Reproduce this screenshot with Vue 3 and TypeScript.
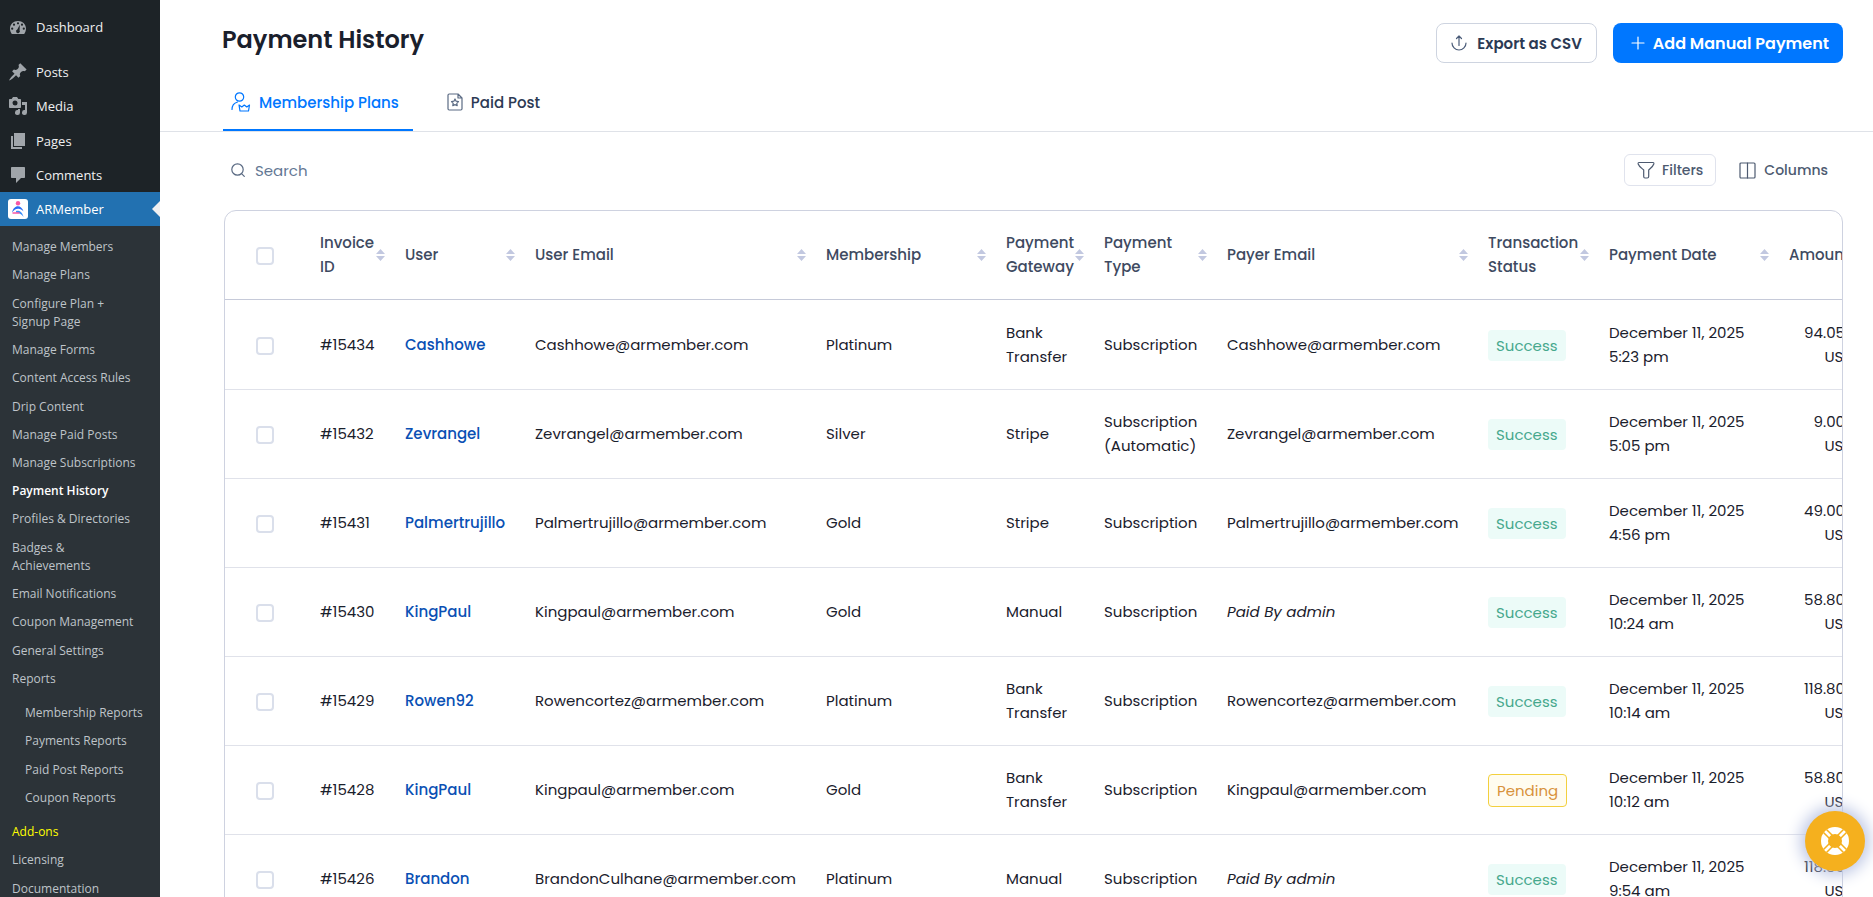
<script setup lang="ts">
import { ref } from 'vue'

interface MenuItem { label: string; kind?: 'current' | 'addons'; children?: string[] }
interface Payment {
  id: string; user: string; email: string; plan: string; gateway: string; type: string
  payer: string; status: 'Success' | 'Pending'; date: string; time: string; amount: string
}

const topMenu: { label: string; icon: string }[] = [
  { label: 'Posts', icon: 'posts' },
  { label: 'Media', icon: 'media' },
  { label: 'Pages', icon: 'pages' },
  { label: 'Comments', icon: 'comments' },
]

const subMenu: MenuItem[] = [
  { label: 'Manage Members' },
  { label: 'Manage Plans' },
  { label: 'Configure Plan + Signup Page' },
  { label: 'Manage Forms' },
  { label: 'Content Access Rules' },
  { label: 'Drip Content' },
  { label: 'Manage Paid Posts' },
  { label: 'Manage Subscriptions' },
  { label: 'Payment History', kind: 'current' },
  { label: 'Profiles & Directories' },
  { label: 'Badges & Achievements' },
  { label: 'Email Notifications' },
  { label: 'Coupon Management' },
  { label: 'General Settings' },
  { label: 'Reports', children: ['Membership Reports', 'Payments Reports', 'Paid Post Reports', 'Coupon Reports'] },
  { label: 'Add-ons', kind: 'addons' },
  { label: 'Licensing' },
  { label: 'Documentation' },
]

const columns: { label: string; key: string }[] = [
  { label: 'Invoice ID', key: 'invoice' },
  { label: 'User', key: 'user' },
  { label: 'User Email', key: 'email' },
  { label: 'Membership', key: 'plan' },
  { label: 'Payment Gateway', key: 'gateway' },
  { label: 'Payment Type', key: 'type' },
  { label: 'Payer Email', key: 'payer' },
  { label: 'Transaction Status', key: 'status' },
  { label: 'Payment Date', key: 'date' },
  { label: 'Amount', key: 'amount' },
]

const day = 'December 11, 2025'
const admin = 'Paid By admin'
const payments: Payment[] = [
  { id: '#15434', user: 'Cashhowe', email: 'Cashhowe@armember.com', plan: 'Platinum', gateway: 'Bank Transfer', type: 'Subscription', payer: 'Cashhowe@armember.com', status: 'Success', date: day, time: '5:23 pm', amount: '94.05' },
  { id: '#15432', user: 'Zevrangel', email: 'Zevrangel@armember.com', plan: 'Silver', gateway: 'Stripe', type: 'Subscription (Automatic)', payer: 'Zevrangel@armember.com', status: 'Success', date: day, time: '5:05 pm', amount: '9.00' },
  { id: '#15431', user: 'Palmertrujillo', email: 'Palmertrujillo@armember.com', plan: 'Gold', gateway: 'Stripe', type: 'Subscription', payer: 'Palmertrujillo@armember.com', status: 'Success', date: day, time: '4:56 pm', amount: '49.00' },
  { id: '#15430', user: 'KingPaul', email: 'Kingpaul@armember.com', plan: 'Gold', gateway: 'Manual', type: 'Subscription', payer: admin, status: 'Success', date: day, time: '10:24 am', amount: '58.80' },
  { id: '#15429', user: 'Rowen92', email: 'Rowencortez@armember.com', plan: 'Platinum', gateway: 'Bank Transfer', type: 'Subscription', payer: 'Rowencortez@armember.com', status: 'Success', date: day, time: '10:14 am', amount: '118.80' },
  { id: '#15428', user: 'KingPaul', email: 'Kingpaul@armember.com', plan: 'Gold', gateway: 'Bank Transfer', type: 'Subscription', payer: 'Kingpaul@armember.com', status: 'Pending', date: day, time: '10:12 am', amount: '58.80' },
  { id: '#15426', user: 'Brandon', email: 'BrandonCulhane@armember.com', plan: 'Platinum', gateway: 'Manual', type: 'Subscription', payer: admin, status: 'Success', date: day, time: '9:54 am', amount: '118.80' },
]

const query = ref('')
const selected = ref<string[]>([])
</script>

<template>
  <div class="app">
    <nav class="sidebar" aria-label="Admin menu">
      <a href="#" class="item first">
        <svg class="glyph" viewBox="0 0 20 20"><path fill-rule="evenodd" d="M3.8 17h12.4c1.1-1.5 1.8-3.4 1.8-5.500C18 7 14.400 4 10 4s-8 3-8 7.500c0 2.100.7 4 1.800 5.500zM10 5.200a1.100 1.100 0 110 2.200 1.100 1.100 0 010-2.200zM6 6.600a1.100 1.100 0 110 2.200 1.100 1.100 0 010-2.200zm8 0a1.100 1.100 0 110 2.200 1.100 1.100 0 010-2.200zM4.200 10.600a1.100 1.100 0 110 2.200 1.100 1.100 0 010-2.200zm11.600 0a1.100 1.100 0 110 2.200 1.100 1.100 0 010-2.200zM11.800 7.800l-.2 5.500a1.900 1.900 0 11-2.300-.8z" /></svg>
        <span>Dashboard</span>
      </a>
      <a v-for="m in topMenu" :key="m.label" href="#" class="item">
        <svg v-if="m.icon === 'posts'" class="glyph" viewBox="0 0 20 20"><path d="M10.440 3.020l1.820-1.820 6.360 6.350-1.830 1.820c-1.050-.68-2.480-.57-3.410.36l-.75.750c-.92.930-1.040 2.350-.35 3.410l-1.830 1.820-2.410-2.410-2.800 2.790c-.42.420-3.380 2.710-3.800 2.290s1.860-3.390 2.280-3.810l2.790-2.790L4.100 9.360l1.830-1.820c1.050.690 2.480.570 3.400-.360l.75-.750c.930-.920 1.050-2.350.360-3.410z" /></svg>
        <svg v-else-if="m.icon === 'media'" class="glyph" viewBox="0 0 20 20"><path fill-rule="evenodd" d="M13 11V4c0-.55-.45-1-1-1h-1.670L9 1H5L3.670 3H2c-.55 0-1 .45-1 1v7c0 .55.450 1 1 1h10c.55 0 1-.45 1-1zM7 4.500a2.500 2.500 0 110 5 2.500 2.500 0 010-5zM14 6h5v10.500a2.500 2.500 0 11-2-2.450V9h-3zm-4 8.050V13h2v3.500a2.500 2.500 0 11-2-2.450z" /></svg>
        <svg v-else-if="m.icon === 'pages'" class="glyph" viewBox="0 0 20 20"><path d="M6 15V2h11v13H6zM5 16h9v2H3V5h2v11z" /></svg>
        <svg v-else class="glyph" viewBox="0 0 20 20"><path d="M4 2h12c.6 0 1 .4 1 1v9c0 .6-.4 1-1 1h-3l-5 5v-5H4c-.6 0-1-.4-1-1V3c0-.6.4-1 1-1z" /></svg>
        <span>{{ m.label }}</span>
      </a>
      <a href="#" class="item active">
        <svg class="glyph" viewBox="0 0 20 20"><rect width="20" height="20" rx="3" fill="#fff" /><circle cx="10" cy="4.200" r="2.200" fill="#f857a6" /><path d="M4 13.500C4.800 9.500 7.300 7.200 9.800 7.200c2.600 0 4.800 2 5.700 5.300-1.800-2.200-3.600-2.900-5.500-2.700-2.400.2-4.200 1.400-6 3.700z" fill="#2a6df4" /><path d="M8 12c3-.8 6.500 1 7.500 6-1.500-2.500-4-4.300-7.500-4.500z" fill="#3b8ef8" /><path d="M4.500 14h7" stroke="#f857a6" stroke-width="1.500" /></svg>
        <span>ARMember</span>
      </a>
      <ul class="submenu">
        <li v-for="s in subMenu" :key="s.label">
          <a href="#" class="sub" :class="s.kind">{{ s.label }}</a>
          <ul v-if="s.children" class="nested">
            <li v-for="c in s.children" :key="c"><a href="#" class="sub">{{ c }}</a></li>
          </ul>
        </li>
      </ul>
    </nav>

    <main class="main">
      <header class="header">
        <h1>Payment History</h1>
        <div class="actions">
          <button type="button" class="btn outline">
            <svg width="16" height="16" viewBox="0 0 16 16" class="line"><path d="M1 8a7 7 0 0014 0M8 10.500V1.500M5.500 3.500L8 1l2.500 2.500" /></svg>
            Export as CSV
          </button>
          <button type="button" class="btn primary">
            <svg width="14" height="14" viewBox="0 0 14 14" class="line"><path d="M7 1v12M1 7h12" /></svg>
            Add Manual Payment
          </button>
        </div>
      </header>

      <div class="tabs" role="tablist">
        <button type="button" role="tab" aria-selected="true" class="tab on">
          <svg width="20" height="20" viewBox="0 0 20 20" class="line"><circle cx="8.500" cy="5" r="4.200" /><path d="M1 17.500c0-4 2-6.500 5.500-7.500M8 13l1 6h8.500l1-6-2.700 2-2.500-2-2.500 2z" /></svg>
          Membership Plans
        </button>
        <button type="button" role="tab" aria-selected="false" class="tab">
          <svg width="16" height="18" viewBox="0 0 16 18" class="line"><path d="M1 2.200C1 1.400 1.500 1 2.200 1H11l4 4v10.800c0 .8-.5 1.200-1.200 1.200H2.200C1.500 17 1 16.600 1 15.800zM11 1v4h4M8 6l1.100 2.200 2.400.4-1.700 1.700.4 2.400L8 11.600l-2.200 1.100.4-2.400-1.700-1.700 2.400-.4z" /></svg>
          Paid Post
        </button>
      </div>

      <section class="content">
        <div class="toolbar">
          <label class="search">
            <svg width="14" height="14" viewBox="0 0 14 14" class="line"><circle cx="6.500" cy="6.500" r="5.700" /><path d="M10.800 10.800L13.300 13.300" /></svg>
            <input v-model="query" type="text" placeholder="Search" aria-label="Search" />
          </label>
          <div class="tools">
            <button type="button" class="tool boxed">
              <svg width="18" height="18" viewBox="0 0 18 18" class="line"><path d="M2 1.500h14c.8 0 1 .8.8 1.500-.8 2.500-3 4-5.100 6v6.500c0 1-.7 1.500-1.500 1.500H8c-.8 0-1.300-.5-1.300-1.500V9C4.500 7 2 5.500 1.200 3 1 2.300 1.200 1.500 2 1.500z" /></svg>
              Filters
            </button>
            <button type="button" class="tool">
              <svg width="17" height="17" viewBox="0 0 17 17" class="line"><rect x="1" y="1" width="15" height="15" rx="1" /><path d="M8.500 1v15" /></svg>
              Columns
            </button>
          </div>
        </div>

        <div class="frame">
          <table>
            <colgroup>
              <col class="c-check" />
              <col v-for="c in columns" :key="c.key" :class="'c-' + c.key" />
            </colgroup>
            <thead>
              <tr>
                <th class="check"><input type="checkbox" aria-label="Select all payments" /></th>
                <th v-for="c in columns" :key="c.key" scope="col">
                  <div class="head">
                    <span>{{ c.label }}</span>
                    <svg v-if="c.key !== 'amount'" width="9" height="12" viewBox="0 0 9 12" class="sort"><path d="M4.500 0L9 5H0zM0 7h9l-4.500 5z" /></svg>
                  </div>
                </th>
              </tr>
            </thead>
            <tbody>
              <tr v-for="p in payments" :key="p.id">
                <td class="check"><input v-model="selected" type="checkbox" :value="p.id" :aria-label="'Select ' + p.id" /></td>
                <td>{{ p.id }}</td>
                <td><a href="#" class="user">{{ p.user }}</a></td>
                <td>{{ p.email }}</td>
                <td>{{ p.plan }}</td>
                <td>{{ p.gateway }}</td>
                <td>{{ p.type }}</td>
                <td><em v-if="p.payer === admin">{{ p.payer }}</em><template v-else>{{ p.payer }}</template></td>
                <td><span class="badge" :class="p.status.toLowerCase()">{{ p.status }}</span></td>
                <td>{{ p.date }}<br />{{ p.time }}</td>
                <td class="amount"><span class="value">{{ p.amount }}</span><br />USD</td>
              </tr>
            </tbody>
          </table>
        </div>
      </section>
    </main>

    <button type="button" class="help" aria-label="Help">
      <svg width="28" height="28" viewBox="0 0 28 28"><circle cx="14" cy="14" r="10.500" fill="none" stroke="#fff" stroke-width="7" /><path d="M2.500 5.500l7 7M5.500 2.500l7 7M25.500 5.500l-7 7M22.500 2.500l-7 7M2.500 22.500l7-7M5.500 25.500l7-7M25.500 22.500l-7-7M22.500 25.500l-7-7" stroke="#f5b01e" stroke-width="1.500" /></svg>
    </button>
  </div>
</template>

<style>
body {
  margin: 0;
  background: #fff;
}
</style>

<style scoped>
.app {
  display: flex;
  height: 100vh;
  overflow: hidden;
  font-family: Poppins, Inter, sans-serif;
  font-size: 15px;
  color: #1a202c;
}
* {
  box-sizing: border-box;
}
a {
  text-decoration: none;
}
button {
  font-family: inherit;
  border: 0;
  background: none;
  cursor: pointer;
  padding: 0;
}
.line {
  flex: none;
  fill: none;
  stroke: currentColor;
  stroke-width: 1.2;
  stroke-linecap: round;
  stroke-linejoin: round;
}

.sidebar {
  flex: none;
  width: 160px;
  padding-top: 10px;
  overflow-y: auto;
  scrollbar-width: none;
  background: #1d2327;
  font-family: "Segoe UI", "Open Sans", "Noto Sans", sans-serif;
}
.item {
  position: relative;
  display: flex;
  align-items: center;
  gap: 8px;
  padding: 8px;
  font-size: 13px;
  line-height: 1.4;
  color: #f0f0f1;
}
.item.first {
  margin-bottom: 11px;
}
.glyph {
  flex: none;
  width: 20px;
  height: 20px;
  margin: -1px 0;
  fill: #a0a5aa;
}
.item.active {
  background: #2271b1;
  color: #fff;
}
.item.active::after {
  content: "";
  position: absolute;
  right: 0;
  top: 50%;
  margin-top: -8px;
  border: 8px solid transparent;
  border-right-color: #f0f0f1;
  border-left-width: 0;
}
.submenu,
.nested {
  list-style: none;
  margin: 0;
  padding: 7px 0;
}
.submenu {
  background: #2c3338;
}
.sub {
  display: block;
  padding: 5px 20px 5px 12px;
  font-size: 12px;
  line-height: 1.52;
  color: #bfc4c9;
}
.nested {
  padding: 6px 0;
}
.nested .sub {
  padding-left: 25px;
  padding-right: 8px;
}
.sub.current {
  color: #fff;
  font-weight: 600;
}
.sub.addons {
  color: #ff0;
}

.main {
  flex: 1;
  min-width: 0;
  overflow-y: auto;
  scrollbar-width: none;
}
.header {
  display: flex;
  justify-content: space-between;
  align-items: flex-start;
  padding: 23px 30px 0 62px;
}
h1 {
  margin: 0;
  font-size: 24px;
  line-height: 34px;
  font-weight: 600;
}
.actions {
  display: flex;
  gap: 16px;
}
.btn {
  display: flex;
  align-items: center;
  height: 40px;
  border-radius: 8px;
  font-weight: 600;
  white-space: nowrap;
}
.outline {
  gap: 10px;
  padding: 0 14px;
  border: 1px solid #ced4e0;
  font-size: 15px;
  color: #2c3a54;
}
.outline svg {
  color: #4a5b78;
}
.primary {
  gap: 8px;
  padding: 0 14px 0 18px;
  background: #0077ff;
  font-size: 16px;
  color: #fff;
}
.tabs {
  display: flex;
  gap: 26px;
  padding-left: 63px;
  border-bottom: 1px solid #dfe2e8;
}
.tab {
  display: flex;
  align-items: center;
  gap: 8px;
  height: 68px;
  padding: 12px 14px 0 8px;
  border-bottom: 2px solid transparent;
  font-size: 15px;
  font-weight: 500;
  color: #2c3a54;
}
.tab svg {
  color: #5a6a83;
}
.tab.on,
.tab.on svg {
  color: #0077ff;
}
.tab.on {
  border-bottom-color: #0077ff;
}

.content {
  padding: 22px 30px 40px 64px;
}
.toolbar {
  display: flex;
  justify-content: space-between;
  align-items: center;
  margin-bottom: 24px;
}
.search {
  display: flex;
  align-items: center;
  gap: 10px;
  padding-left: 7px;
  color: #5a6a83;
}
.search input {
  width: 240px;
  padding: 0;
  border: 0;
  outline: 0;
  font: inherit;
  color: #1a202c;
}
.search input::placeholder {
  color: #637794;
}
.tools {
  display: flex;
  gap: 15px;
}
.tool {
  display: flex;
  align-items: center;
  gap: 8px;
  height: 32px;
  padding: 0 15px 0 8px;
  font-size: 14px;
  font-weight: 500;
  color: #4d5a70;
}
.tool.boxed {
  gap: 7px;
  padding: 0 12px;
  border: 1px solid #e0e3ed;
  border-radius: 6px;
}

.frame {
  border: 1px solid #ced2e0;
  border-radius: 12px;
  overflow-x: auto;
}
table {
  width: 100%;
  min-width: 1642px;
  table-layout: fixed;
  border-collapse: separate;
  border-spacing: 0;
}
.c-check { width: 83px; }
.c-invoice { width: 85px; }
.c-user { width: 130px; }
.c-email { width: 291px; }
.c-plan { width: 180px; }
.c-gateway { width: 98px; }
.c-type { width: 123px; }
.c-payer { width: 261px; }
.c-status { width: 121px; }
.c-date { width: 180px; }
.c-amount { width: 90px; }
th,
td {
  height: 89px;
  padding: 0 0 0 12px;
  border-bottom: 1px solid #e0e2ea;
  line-height: 24px;
  text-align: left;
  vertical-align: middle;
}
th {
  border-bottom-color: #c6cad9;
  font-weight: 500;
  color: #3e4a61;
}
tbody tr:first-child td {
  height: 90px;
  padding-top: 1px;
}
.head {
  display: flex;
  justify-content: space-between;
  align-items: center;
  padding-right: 8px;
}
.head span {
  min-width: 0;
}
.sort {
  flex: none;
  margin-left: -8px;
  fill: #c2c8e0;
}
th.check,
td.check {
  padding-left: 31px;
}
.check input {
  appearance: none;
  display: block;
  width: 18px;
  height: 18px;
  margin: 2px 0 0;
  border: 2px solid #dadfeb;
  border-radius: 4px;
  background: #fff;
}
.check input:checked {
  border-color: #0077ff;
  background: #0077ff;
}
.user {
  font-weight: 500;
  color: #0a50b4;
}
.amount {
  padding-right: 13px;
  text-align: right;
}
.value {
  padding-right: 9px;
}
.badge {
  display: inline-block;
  padding: 4px 8px 3px;
  border-radius: 4px;
  vertical-align: middle;
}
.badge.success {
  background: #ecfbf8;
  color: #46a88d;
}
.badge.pending {
  border: 1px solid #f3d03e;
  background: #fffcf0;
  color: #d8923c;
}

.help {
  position: fixed;
  right: 8px;
  bottom: 26px;
  display: flex;
  align-items: center;
  justify-content: center;
  width: 60px;
  height: 60px;
  border-radius: 50%;
  background: #f5b01e;
  box-shadow: 0 0 16px 4px #b9c3e2;
}
</style>
